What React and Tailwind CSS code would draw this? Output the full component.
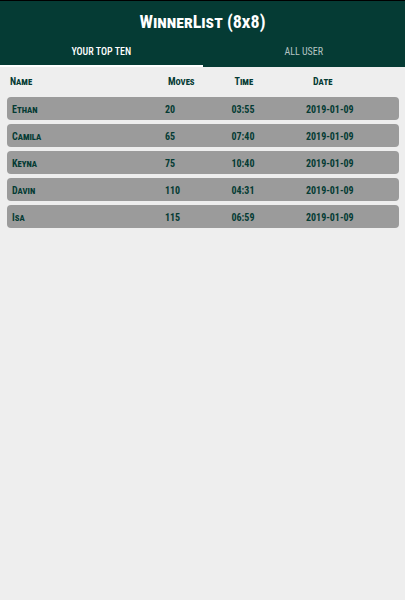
import { useState } from "react";

const winners = [
  { name: "Ethan", moves: 20, time: "03:55", date: "2019-01-09" },
  { name: "Camila", moves: 65, time: "07:40", date: "2019-01-09" },
  { name: "Keyna", moves: 75, time: "10:40", date: "2019-01-09" },
  { name: "Davin", moves: 110, time: "04:31", date: "2019-01-09" },
  { name: "Isa", moves: 115, time: "06:59", date: "2019-01-09" },
];

const tabs = ["YOUR TOP TEN", "ALL USER"];

function App() {
  const [active, setActive] = useState(0);

  return (
    <div className="min-h-screen bg-[#eeeeee] text-[#053b34] font-['Roboto_Condensed',Roboto,sans-serif]">
      <header className="border-t border-black bg-[#053b34] text-white">
        <h1 className="pt-2 text-center text-[18px] leading-[26px] font-bold [font-variant-caps:small-caps]">WinnerList (8x8)</h1>
        <div className="flex">
          {tabs.map((tab, index) => (
            <button
              key={tab}
              type="button"
              onClick={() => setActive(index)}
              className={"flex-1 h-8 border-b-2 pt-[2px] text-[10px] " + (active === index ? "border-white font-medium text-white" : "border-transparent text-[#b4c4c2]")}
            >
              {tab}
            </button>
          ))}
        </div>
      </header>

      <main className="pl-[7px] pr-[6px]">
        <table className="w-full table-fixed border-separate border-spacing-x-0 border-spacing-y-1 text-left text-[10px] leading-[21px] font-bold [font-variant-caps:small-caps]">
          <colgroup>
            <col className="w-[39%]" />
            <col className="w-[17%]" />
            <col className="w-[19%]" />
            <col className="w-[25%]" />
          </colgroup>
          <thead>
            <tr className="leading-[22px]">
              <th className="pl-[3px]">Name</th>
              <th className="pl-2">Moves</th>
              <th className="pl-2">Time</th>
              <th className="pl-3">Date</th>
            </tr>
          </thead>
          <tbody>
            {winners.map((winner) => (
              <tr key={winner.name}>
                <td className="rounded-l bg-[#9b9b9b] pt-[2px] pl-[5px]">{winner.name}</td>
                <td className="bg-[#9b9b9b] pt-[2px] pl-[5px]">{winner.moves}</td>
                <td className="bg-[#9b9b9b] pt-[2px] pl-[5px]">{winner.time}</td>
                <td className="rounded-r bg-[#9b9b9b] pt-[2px] pl-[5px]">{winner.date}</td>
              </tr>
            ))}
          </tbody>
        </table>
      </main>
    </div>
  );
}

export default App;
